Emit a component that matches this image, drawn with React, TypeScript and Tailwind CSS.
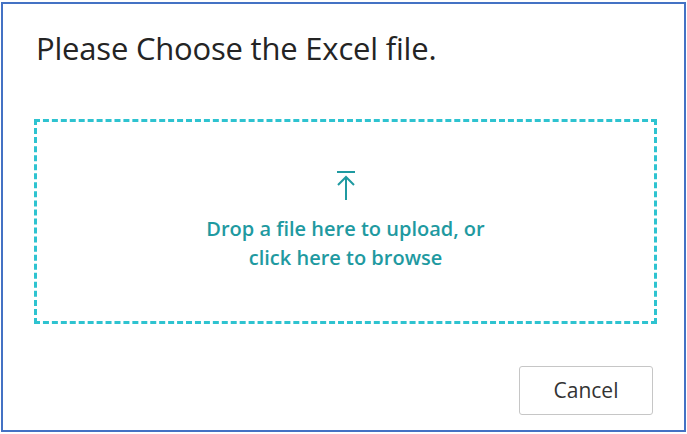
export default function App() {
  return (
    <div className="w-[687px] h-[434px] bg-white relative" style={{ fontFamily: '"Open Sans", "Noto Sans", sans-serif' }}>
      <div className="absolute left-[1px] top-[2px] w-[685px] h-[430px] border-2 border-[#4472c4]" />
      <div className="pt-[28px] pl-[36px] pr-[34px] flex flex-col">
        <div className="text-[31px] leading-[40px] text-[#242424] tracking-[-0.2px]">Please Choose the Excel file.</div>
        <div className="mt-[51px] ml-[-2px] mr-[-4px] h-[205px] border-[3px] border-dashed border-[#2ec3d0] flex flex-col items-center pt-[48px]">
          <svg width="20" height="30" viewBox="0 0 20 30" fill="none" stroke="#1f9aa1" strokeWidth="2">
            <line x1="1" y1="2" x2="19" y2="2" />
            <line x1="10" y1="7" x2="10" y2="30" />
            <polyline points="2,15 10,7 18,15" />
          </svg>
          <div className="mt-[14px] text-[20px] leading-[29px] font-semibold text-[#1f9aa1] text-center">
            Drop a file here to upload, or
            <br />
            click here to browse
          </div>
        </div>
        <div className="flex justify-end mt-[42px]">
          <button className="w-[134px] h-[49px] border border-[#c6c6c6] rounded-[3px] text-[21px] text-[#333] bg-white">Cancel</button>
        </div>
      </div>
    </div>
  );
}
